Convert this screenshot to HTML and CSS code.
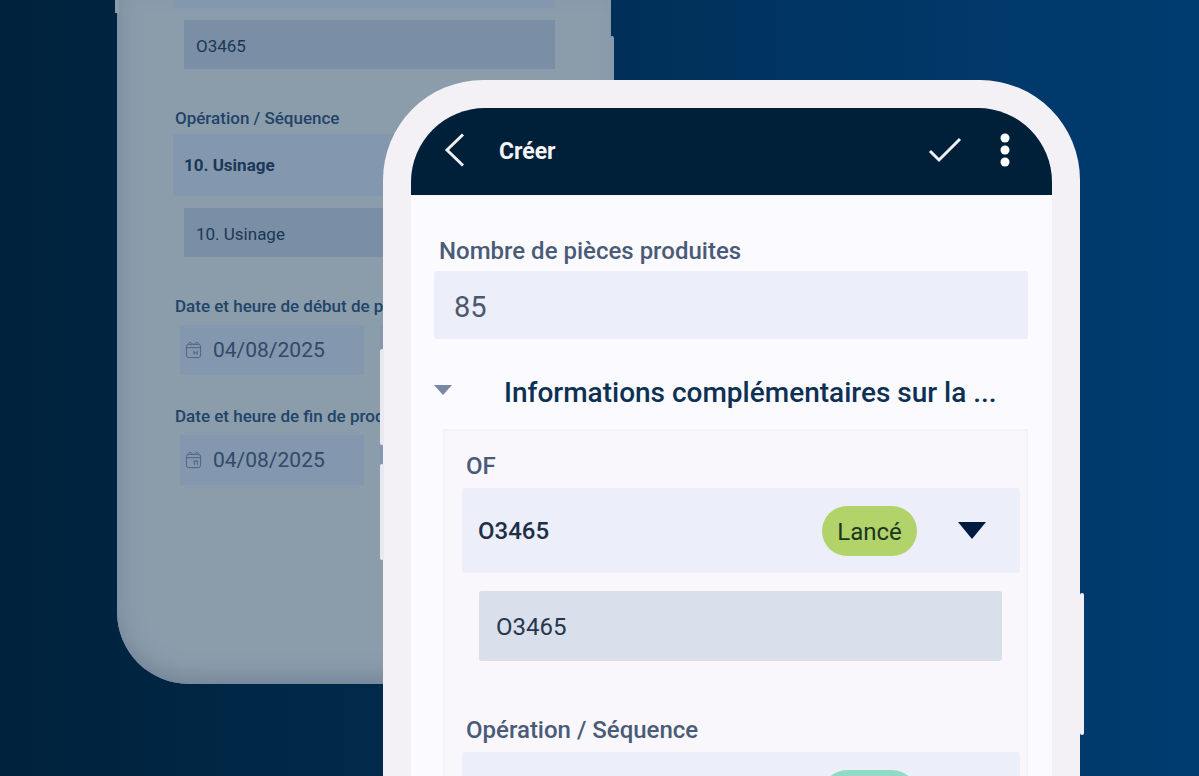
FILE: index.html
```html
<!DOCTYPE html>
<html lang="fr">
  <head>
    <meta charset="UTF-8" />
    <meta name="viewport" content="width=device-width, initial-scale=1.0" />
    <title>Créer</title>
    <link rel="stylesheet" href="styles.css">
  </head>
  <body>
    <main class="scene">
      <!-- Phone in the background -->
      <section class="phone phone-back">
        <span class="side-key key-back-left"></span>
        <span class="side-key key-back-right"></span>
        <form class="back-form">
          <div class="select-row"></div>
          <input class="readonly" type="text" value="O3465" aria-label="OF" readonly />

          <label for="back-operation">Opération / Séquence</label>
          <div class="select-row">
            <select id="back-operation">
              <option>10. Usinage</option>
            </select>
          </div>
          <input class="readonly" type="text" value="10. Usinage" aria-label="Séquence" readonly />

          <label for="start-date">Date et heure de début de production</label>
          <div class="date-row">
            <div class="date-field">
              <svg class="calendar" viewBox="0 0 18 20" aria-hidden="true">
                <rect x="1.500" y="4" width="15" height="14" rx="2.500" />
                <path d="M1.500 7.500h15M3.500 3.500l2-2 2 2M10.500 3.500l2-2 2 2" />
                <path d="M9.500 11v4M13 11v4M9.500 13h3" />
              </svg>
              <input id="start-date" type="text" value="04/08/2025" />
            </div>
            <div class="date-field"></div>
          </div>

          <label for="end-date">Date et heure de fin de production</label>
          <div class="date-row">
            <div class="date-field">
              <svg class="calendar" viewBox="0 0 18 20" aria-hidden="true">
                <rect x="1.500" y="4" width="15" height="14" rx="2.500" />
                <path d="M1.500 7.500h15M3.500 3.500l2-2 2 2M10.500 3.500l2-2 2 2" />
                <path d="M9 11h5M10 11v4M13 11v4" />
              </svg>
              <input id="end-date" type="text" value="04/08/2025" />
            </div>
            <div class="date-field"></div>
          </div>
        </form>
      </section>

      <!-- Phone in front -->
      <section class="phone phone-front">
        <span class="side-key key-volume-up"></span>
        <span class="side-key key-volume-down"></span>
        <span class="side-key key-power"></span>
        <div class="screen">
          <header class="topbar">
            <button type="button" class="icon-btn" aria-label="Retour">
              <svg width="22" height="34" viewBox="0 0 22 34">
                <path d="M19 1.500L3 17l16 15.500" />
              </svg>
            </button>
            <h1>Créer</h1>
            <button type="button" class="icon-btn" aria-label="Valider">
              <svg width="34" height="26" viewBox="0 0 34 26">
                <path d="M2 14l9 9L32 2" />
              </svg>
            </button>
            <button type="button" class="icon-btn menu-btn" aria-label="Plus d'options">
              <svg class="dots" width="10" height="34" viewBox="0 0 10 34">
                <circle cx="5" cy="5" r="4.500" />
                <circle cx="5" cy="17" r="4.500" />
                <circle cx="5" cy="29" r="4.500" />
              </svg>
            </button>
          </header>

          <form class="front-form">
            <label for="quantity">Nombre de pièces produites</label>
            <input class="quantity" id="quantity" type="text" value="85" />

            <button type="button" class="section-toggle" aria-expanded="true">
              <svg width="18" height="10" viewBox="0 0 18 10">
                <path d="M0 0h18L9 10z" />
              </svg>
              <span>Informations complémentaires sur la ...</span>
            </button>

            <div class="panel">
              <label for="order">OF</label>
              <div class="select-row">
                <select id="order">
                  <option>O3465</option>
                </select>
                <span class="chip">Lancé</span>
                <svg class="arrow" width="28" height="17" viewBox="0 0 28 17">
                  <path d="M0 0h28L14 17z" />
                </svg>
              </div>
              <input class="readonly" type="text" value="O3465" aria-label="Numéro OF" readonly />

              <label for="operation">Opération / Séquence</label>
              <div class="select-row">
                <select id="operation"></select>
                <span class="chip chip-teal"></span>
                <svg class="arrow" width="28" height="17" viewBox="0 0 28 17">
                  <path d="M0 0h28L14 17z" />
                </svg>
              </div>
            </div>
          </form>
        </div>
      </section>
    </main>
  </body>
</html>
```

FILE: styles.css
```css
* {
  box-sizing: border-box;
}

body {
  margin: 0;
  font-family: Roboto, "Liberation Sans", sans-serif;
  color: #14304d;
}

.scene {
  display: grid;
  grid-template-columns: 117fr 266fr 228fr 469fr 119fr;
  grid-template-rows: auto;
  align-items: start;
  height: 100vh;
  overflow: hidden;
  background: linear-gradient(90deg, #00223c 0%, #00294a 30%, #003059 52%, #003869 80%, #003c70 100%);
}

input,
select,
button {
  margin: 0;
  border: none;
  background: none;
  color: inherit;
  font: inherit;
  appearance: none;
}

input,
select {
  width: 100%;
  min-width: 0;
  outline: none;
}

label {
  display: block;
  white-space: nowrap;
  font-weight: 500;
}

.phone {
  position: relative;
  grid-row: 1;
}

.side-key {
  position: absolute;
  width: 4px;
  border-radius: 2px;
}

/* Background phone */
.phone-back {
  grid-column: 2 / 4;
  height: 684px;
  border-radius: 0 0 72px 72px;
  background: #8b9cab;
  box-shadow: inset 0 -20px 20px -12px #76879a, inset 16px 0 20px -12px #7e8fa2;
  color: #1b3856;
}

.key-back-left {
  top: 0;
  left: -2px;
  height: 13px;
  border-radius: 0;
  background: #8b9cab;
}

.key-back-right {
  top: 36px;
  right: -3px;
  height: 120px;
  background: #879bb0;
}

.back-form {
  padding: 0 56px;
  font-size: 17px;
}

.back-form label {
  margin-left: 2px;
  line-height: 26px;
  color: #1f4468;
}

.back-form .select-row {
  height: 62px;
  padding: 0 11px;
  background: #8397ae;
}

.back-form .select-row:first-child {
  height: 8px;
}

.back-form .select-row select {
  height: 62px;
  font-weight: 700;
}

.back-form .readonly {
  display: block;
  width: calc(100% - 11px);
  height: 49px;
  margin: 12px 0 36px 11px;
  padding: 2px 12px 0;
  background: #7a8ea5;
}

.back-form label + .select-row {
  margin-top: 3px;
}

.date-row {
  display: flex;
  gap: 16px;
  margin: 6px 0 28px 7px;
}

.date-field {
  display: flex;
  align-items: center;
  gap: 9px;
  flex: 1;
  height: 50px;
  padding: 0 5px;
  border-radius: 3px;
  background: #8397ae;
  font-size: 21px;
  color: #304a68;
}

.date-field:first-child {
  flex: none;
  width: 184px;
}

.calendar {
  flex: none;
  width: 17px;
  height: 20px;
  fill: none;
  stroke: #4b627e;
  stroke-width: 1;
}

/* Front phone */
.phone-front {
  grid-column: 3 / 5;
  margin-top: 80px;
  padding: 28px 28px 0;
  border-radius: 100px 100px 0 0;
  background: #f3f1f6;
}

.key-volume-up,
.key-volume-down {
  left: -3px;
  height: 96px;
  background: #eae8f0;
}

.key-volume-up {
  top: 269px;
}

.key-volume-down {
  top: 384px;
}

.key-power {
  top: 513px;
  right: -4px;
  height: 142px;
  background: #f0eff4;
}

.screen {
  overflow: hidden;
  border-radius: 74px 74px 0 0;
  background: #fbfaff;
}

.topbar {
  display: flex;
  align-items: center;
  height: 87px;
  padding: 0 42px 3px 33px;
  background: #00203a;
  color: #f4f4f6;
}

.topbar h1 {
  flex: 1;
  margin: 0 0 0 33px;
  padding-top: 3px;
  font-size: 23px;
  font-weight: 700;
}

.icon-btn {
  display: flex;
  padding: 0;
  cursor: pointer;
}

.icon-btn svg {
  fill: none;
  stroke: #f0f0f2;
  stroke-width: 3;
}

.icon-btn .dots {
  fill: #ffffff;
  stroke: none;
}

.menu-btn {
  margin-left: 38px;
}

.front-form {
  padding: 40px 24px 0 23px;
  font-size: 24px;
}

.front-form label {
  margin-left: 5px;
  line-height: 32px;
  color: #4a5b78;
}

.quantity {
  display: block;
  height: 68px;
  margin-top: 4px;
  padding: 3px 20px 0;
  border-radius: 3px;
  background: #eceefa;
  font-size: 29px;
  color: #4b586c;
}

.section-toggle {
  display: flex;
  align-items: center;
  gap: 52px;
  width: 100%;
  height: 90px;
  padding: 16px 0 0;
  white-space: nowrap;
  font-size: 28px;
  font-weight: 500;
  color: #0d3153;
  cursor: pointer;
}

.section-toggle svg {
  flex: none;
  margin-top: -4px;
  fill: #7788a5;
}

.panel {
  margin-left: 9px;
  padding: 19px 6px 0 17px;
  border: 2px solid #f4f3f6;
  border-bottom: none;
  background: #f9f7fb;
}

.panel label {
  margin-left: 4px;
}

.panel .select-row {
  display: flex;
  align-items: center;
  height: 85px;
  margin-top: 6px;
  padding: 0 34px 0 16px;
  border-radius: 3px;
  background: #eceefa;
}

.panel select {
  flex: 1;
  height: 85px;
  font-weight: 500;
  color: #1f2f45;
}

.chip {
  min-width: 95px;
  height: 50px;
  padding: 0 15px;
  border-radius: 25px;
  background: #b2d26a;
  line-height: 52px;
  text-align: center;
  color: #1c351f;
}

.chip-teal {
  background: #93d9c8;
}

.arrow {
  flex: none;
  margin-left: 41px;
  fill: #001b3d;
}

.panel .readonly {
  display: block;
  width: calc(100% - 35px);
  height: 70px;
  margin: 18px 0 53px 17px;
  padding: 2px 17px 0;
  border-radius: 3px;
  background: #d9dfeb;
  color: #26374d;
}
```
